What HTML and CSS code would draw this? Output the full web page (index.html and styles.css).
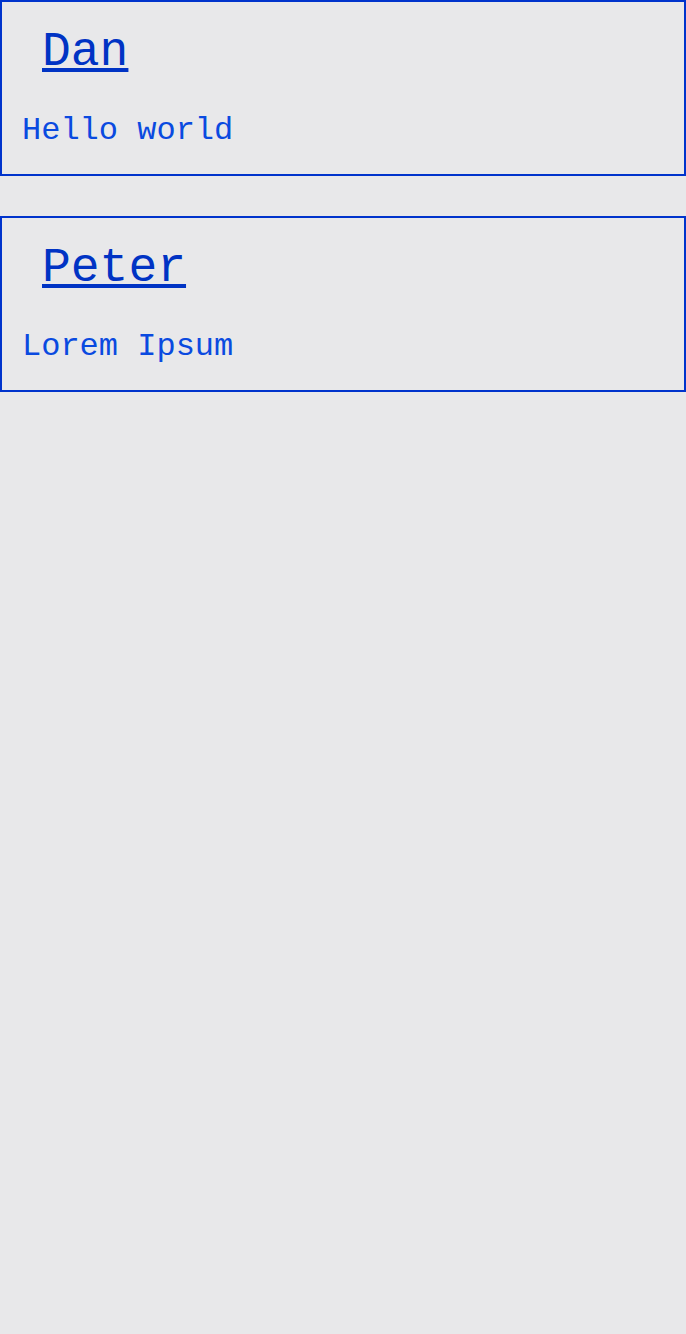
FILE: index.html
```html
<!DOCTYPE html>
<html>
<head>
<meta charset="utf-8">
<link rel="stylesheet" href="styles.css">
</head>
<body>
<div class="list">
  <div class="card">
    <h1 class="name"><a href="#">Dan</a></h1>
    <p class="msg">Hello world</p>
  </div>
  <div class="card">
    <h1 class="name"><a href="#">Peter</a></h1>
    <p class="msg">Lorem Ipsum</p>
  </div>
</div>
</body>
</html>
```
FILE: styles.css
```css
html, body {
  margin: 0;
  padding: 0;
  background: #e8e8ea;
}
body {
  font-family: "Liberation Mono", monospace;
}
.list {
  display: flex;
  flex-direction: column;
  gap: 40px;
}
.card {
  border: 2px solid #0033cc;
  padding: 23px 20px 25px;
}
.name {
  margin: 0 0 34px 20px;
  font-size: 48px;
  line-height: 54px;
  font-weight: 400;
}
.name a {
  color: #0033c4;
  text-decoration: underline;
}
.msg {
  margin: 0;
  font-size: 32px;
  line-height: 36px;
  color: #0a4ae0;
}
```
